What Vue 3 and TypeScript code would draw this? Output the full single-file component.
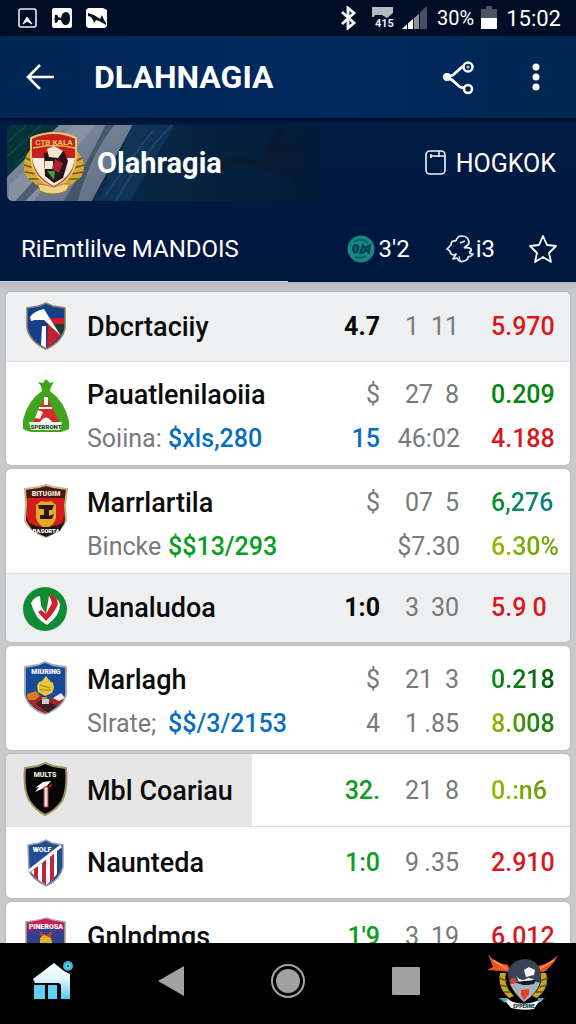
<script setup lang="ts">
interface Row {
  crest: string
  name: string
  label?: string
  value?: string
  tone?: string
  score: string
  scoreTone: string
  mid: string[]
  odds: string
  oddsTone: string
  score2?: string
  score2Tone?: string
  mid2?: string[]
  odds2?: string
  odds2Tone?: string
  shade?: string
  tall?: boolean
}

const cards: Row[][] = [
  [
    { crest: 'bolt', name: 'Dbcrtaciiy', score: '4.7', scoreTone: 'black', mid: ['1', '11'], odds: '5.970', oddsTone: 'red', shade: 'shaded' },
    {
      crest: 'bell', name: 'Pauatlenilaoiia', label: 'Soiina:', value: '$xls,280', tone: 'blue',
      score: '$', scoreTone: 'grey', mid: ['27', '8'], odds: '0.209', oddsTone: 'green',
      score2: '15', score2Tone: 'blue', mid2: ['46:02'], odds2: '4.188', odds2Tone: 'red',
    },
  ],
  [
    {
      crest: 'gold', name: 'Marrlartila', label: 'Bincke', value: '$$13/293', tone: 'lightgreen',
      score: '$', scoreTone: 'grey', mid: ['07', '5'], odds: '6,276', oddsTone: 'teal',
      score2: '', score2Tone: 'grey', mid2: ['$7.30'], odds2: '6.30%', odds2Tone: 'lime',
    },
    { crest: 'round', name: 'Uanaludoa', score: '1:0', scoreTone: 'black', mid: ['3', '30'], odds: '5.9 0', oddsTone: 'red', shade: 'shaded' },
  ],
  [
    {
      crest: 'royal', name: 'Marlagh', label: 'Slrate;', value: '$$/3/2153', tone: 'blue',
      score: '$', scoreTone: 'grey', mid: ['21', '3'], odds: '0.218', oddsTone: 'deep',
      score2: '4', score2Tone: 'grey', mid2: ['1', '.85'], odds2: '8.008', odds2Tone: 'olive',
    },
  ],
  [
    { crest: 'dark', name: 'Mbl Coariau', score: '32.', scoreTone: 'lightgreen', mid: ['21', '8'], odds: '0.:n6', oddsTone: 'lime', shade: 'half', tall: true },
    { crest: 'stripes', name: 'Naunteda', score: '1:0', scoreTone: 'lightgreen', mid: ['9', '.35'], odds: '2.910', oddsTone: 'red', tall: true },
  ],
  [
    { crest: 'purple', name: 'Gnlndmqs', score: "1'9", scoreTone: 'lightgreen', mid: ['3', '19'], odds: '6.012', oddsTone: 'red' },
  ],
]
</script>

<template>
  <div class="screen">
    <div class="status">
      <svg class="s-icon" viewBox="0 0 20 22"><rect x="1" y="2" width="17" height="18" rx="2" fill="none" stroke="#e8eef6" stroke-width="1.6" /><path d="M5 17l4-7 5 7-5-3z" fill="#fff" stroke="#fff" /></svg>
      <svg class="s-icon" viewBox="0 0 20 22"><rect y="1" width="20" height="20" rx="2" fill="#fff" /><path d="M3 8q3-1 3 2l3 1q1-6 5-6 4 0 4 6 0 7-4 7-4 0-5-5l-3 0q0 3-3 3-1-4 0-8z" fill="#06101f" /></svg>
      <svg class="s-icon s-wide" viewBox="0 0 22 22"><path d="M0 3l2-2h15l4 2v16l-2 2H2l-2-2z" fill="#fff" /><path d="M2 6l6 2 6 4 2-4 2 5 2 3v2l-7-4-3-1-2 3-1-3-2-3-3-1z" fill="#06101f" /></svg>
      <span class="grow"></span>
      <svg class="s-icon bt" viewBox="0 0 16 24"><path d="M1 6l12 11-6 5V2l6 5L1 18" fill="none" stroke="#f3f6fa" stroke-width="2.800" /></svg>
      <svg class="s-icon s-tag" viewBox="0 0 24 24"><path d="M1 1h21v6l-6 5-5-3H4l-1 2H1z" fill="#b5bac2" /><text x="4" y="21" font-family="Roboto" font-size="11" font-weight="700" fill="#e9edf2">415</text></svg>
      <svg class="s-icon s-sig" viewBox="0 0 26 24"><path d="M25 0v23H0z" fill="#48505f" /><path d="M17 8v15H0z" fill="#8c939e" /><path d="M11 13v10H0z" fill="#fff" /><path d="M5.500 16v8M11.500 11v13M17.500 6v18" stroke="#07122a" stroke-width="1" /></svg>
      <span class="pct">30%</span>
      <svg class="s-icon s-bat" viewBox="0 0 16 24"><path d="M5 0h6v3h5v9H0V3h5z" fill="#4b5362" /><path d="M0 12h16v11H0z" fill="#fff" /></svg>
      <span class="clock">15:02</span>
    </div>

    <header class="bar">
      <button class="icon-btn back" aria-label="Back">
        <svg width="30" height="30" viewBox="0 0 30 30"><path d="M15 3L3 15l12 12M3 15h26" fill="none" stroke="#fff" stroke-width="2.600" /></svg>
      </button>
      <h1>DLAHNAGIA</h1>
      <button class="icon-btn share" aria-label="Share">
        <svg width="34" height="36" viewBox="0 0 34 36"><path d="M26 7l-5 1-9 8-7 2 6 3 8 7 8 2" fill="none" stroke="#fff" stroke-width="2.800" /><circle cx="6" cy="18" r="4" fill="#fff" /><circle cx="27" cy="8" r="4.500" fill="#0a2a58" stroke="#fff" stroke-width="2.500" /><circle cx="27" cy="8" r="1.500" fill="#b9c6da" /><circle cx="27" cy="30" r="4" fill="#0a2044" stroke="#fff" stroke-width="2.500" /></svg>
      </button>
      <button class="icon-btn more" aria-label="More options">
        <svg width="8" height="30" viewBox="0 0 8 30"><circle cx="4" cy="5" r="3.500" fill="#fff" /><circle cx="4" cy="15" r="3.500" fill="#fff" /><circle cx="4" cy="25" r="3.500" fill="#fff" /></svg>
      </button>
    </header>

    <section class="hero">
      <div class="hero-top">
        <div class="banner">
          <svg class="banner-art" viewBox="0 0 311 76" preserveAspectRatio="xMidYMid slice">
            <defs>
              <linearGradient id="fade"><stop offset="0" stop-color="#173855" /><stop offset=".45" stop-color="#082644" /><stop offset="1" stop-color="#021a37" /></linearGradient>
              <linearGradient id="silk" x2="1" y2="1"><stop offset="0" stop-color="#8690a1" /><stop offset="1" stop-color="#5d6b82" /></linearGradient>
            </defs>
            <rect width="311" height="76" fill="url(#fade)" />
            <path d="M0 0h52L0 52z" fill="#063238" />
            <path d="M0 18L20 0M0 32L34 0M8 40L46 4" stroke="#115048" stroke-width="1" />
            <path d="M52 0h73L84 76H0V52z" fill="url(#silk)" />
            <path d="M66 0h22L26 76H2V60z" fill="#8f98a6" opacity=".7" />
            <path d="M98 0h9Q84 28 70 76H56Q80 38 98 0zM8 76l22-24 8 3-20 21z" fill="#35475f" opacity=".7" />
            <path d="M125 0h42l-45 76H90z" fill="#12395e" opacity=".7" />
            <path d="M164 0Q130 35 108 76M145 6Q122 34 98 70" fill="none" stroke="#315575" stroke-width="2" opacity=".5" />
            <path d="M267 2q8-2 7 6l-3 7 10 6 8 0 1-8 8 3-2 10-13 5-9-3-9 11 10 5 14 2 5 23-5 0-5-18-16-1-16-9-14 0-12-3-14 12-4-2 11-16 12-2 16 6 10-5 6-18 8-5z" fill="#0b1728" opacity=".5" />
          </svg>
          <svg class="emblem" viewBox="0 0 66 64">
            <path d="M9 19Q-2 33 6 46l15 12 4-5Q8 43 9 19zM55 19q13 14 5 27L45 58l-4-5q17-10 14-34z" fill="#d3a936" />
            <path d="M5 27l8 4M3 34l10 3M4 41l12 2M8 48l11 0M61 27l-8 4M63 34l-10 3M62 41l-12 2M58 48l-11 0" stroke="#725713" stroke-width="1.500" />
            <path d="M10 7Q33-3 55 7v18q0 22-22 32Q10 47 10 25z" fill="#c91f20" stroke="#e7c56a" stroke-width="2" />
            <path d="M11 27h43q-2 18-21 28Q14 46 11 27z" fill="#f3eddf" />
            <path d="M12 17Q33 12 54 17" stroke="#e9c358" fill="none" stroke-width="1.500" />
            <text x="33" y="14" text-anchor="middle" font-family="Roboto" font-size="8" font-weight="700" fill="#f3c64b">CTB KALA</text>
            <path d="M23 22l20-2 4 10-5 17-9 5-9-7z" fill="#251319" /><path d="M26 18l7-3 9 5-5 7-9-1zM24 30h8v8h-8z" fill="#f2e5d0" /><path d="M34 28l8 4-4 10-7-4z" fill="#a9222b" /><path d="M26 40l8 0-1 9z" fill="#3d9d45" />
            <path d="M17 53l8 1 8 2 9-3 7 0-4 7Q32 66 19 60z" fill="#efd28b" stroke="#a87b20" />
          </svg>
          <h2>Olahragia</h2>
        </div>
        <button class="book">
          <svg width="22" height="26" viewBox="0 0 22 26"><rect x="1" y="1" width="19" height="23" rx="4" fill="none" stroke="#f1f5fa" stroke-width="1.600" /><path d="M5 6h14M14 1v6M6 4v4" stroke="#f1f5fa" stroke-width="1.500" /></svg>
          <span>HOGKOK</span>
        </button>
      </div>
      <div class="hero-tabs">
        <h3>RiEmtlilve MANDOIS</h3>
        <span class="count first">
          <svg width="28" height="28" viewBox="0 0 28 28"><circle cx="14" cy="14" r="13.500" fill="#128783" /><path d="M6 14q0-5 4-4 3 2 0 7-4 2-4-3zM13 18l3-8 2 3 5-3-1 8-3-3-3 3z" fill="#0d5f6c" stroke="#06364d" stroke-width="1.600" /><path d="M7 7q8-5 14 1M8 22q6 2 11-1" fill="none" stroke="#0a5563" stroke-width="1.600" /></svg>
          <span>3'2</span>
        </span>
        <span class="count second">
          <svg width="28" height="30" viewBox="0 0 28 30"><path d="M10 7q1-5 6-5 6 0 7 6 0 3-3 4l-2 2M10 7q-5-1-5 4l-4 4q3 1 4 5 4 2 5 0l-3 5 4-1q3 5 7 3 4-1 4-4 4-1 5-3l-4-1M18 14q4-1 7 1 1 2-2 3M19 7l-5 2" fill="none" stroke="#e9f1f9" stroke-width="1.700" stroke-linejoin="round" /><path d="M13 22l1 4" stroke="#e9f1f9" /></svg>
          <span>i3</span>
        </span>
        <button class="icon-btn star" aria-label="Favourite">
          <svg width="28" height="28" viewBox="0 0 28 28"><path d="M14 1l4 9 9 1-7 7 2 9-8-5-8 5 2-9-7-7 9-1z" fill="none" stroke="#fff" stroke-width="1.800" stroke-linejoin="round" /></svg>
        </button>
      </div>
    </section>

    <main class="list">
      <div v-for="(card, ci) in cards" :key="ci" class="card">
        <table>
          <tbody>
            <tr v-for="row in card" :key="row.name" :class="[row.shade, { double: row.label, tall: row.tall }]">
              <td class="c-crest">
                <svg class="crest" viewBox="0 0 48 56">
                  <g v-if="row.crest === 'bolt'">
                    <path d="M5 9l12-2 7-3 7 3 12 2v20q-3 14-19 21Q8 43 5 29z" fill="#153e8b" stroke="#8d8062" stroke-width="1.500" />
                    <path d="M26 19l16 0v10q-5 12-17 20z" fill="#c71f2d" /><path d="M29 25l13 0v6l-3 5-8-5z" fill="#253a2c" />
                    <path d="M8 18q4-6 14-8l3 5 14 22-17-16-9 0-4 1z" fill="#fff" /><path d="M20 27h4v22l-5-3z" fill="#fff" />
                  </g>
                  <g v-else-if="row.crest === 'bell'">
                    <path d="M24 3l4 4 4-1-3 5-1 4q15 11 19 30l0 8q-11 5-23 5T1 53l0-9q5-20 19-29l-1-5-3-4 5 1z" fill="#3ea51d" />
                    <path d="M24 20l6 11 8 16H11l7-16z" fill="#d72a25" /><path d="M22 21h4v8h-4zM13 42l3-8 5 2-3 7z" fill="#fff" /><path d="M18 46q6-9 12 0z" fill="#fff" /><path d="M17 32h13" stroke="#fff" stroke-width="2" />
                    <path d="M7 46l33 0-2 8H9z" fill="#eff5e8" /><text x="24" y="53" text-anchor="middle" font-family="Roboto" font-size="6" font-weight="900" fill="#193d20">SPERRONT</text>
                  </g>
                  <g v-else-if="row.crest === 'gold'">
                    <path d="M3 5l14-2 7-2 7 2 14 2-2 16 1 16q-7 11-20 16Q9 48 3 37l1-16z" fill="#4a1717" stroke="#c9b585" stroke-width="2" />
                    <path d="M5 14h37v18q0 6-6 11l-24 0q-7-5-7-11z" fill="#d41c1b" />
                    <text x="24" y="12" text-anchor="middle" font-family="Roboto" font-size="7" font-weight="900" fill="#f4e7d1">BITUGIM</text>
                    <path d="M14 21l5-4 5 1 5-1 5 4v13q-2 7-10 11-8-4-10-11z" fill="#e1ab28" /><path d="M16 21h16l-2 5h-3v6l5-2-2 5H18v-4h4v-6h-5z" fill="#2b160c" />
                    <path d="M5 38q17 10 38 0l-5 9-14 6-13-6z" fill="#201713" /><text x="24" y="49" text-anchor="middle" font-family="Roboto" font-size="6" font-weight="900" fill="#fff">BASORTA</text>
                  </g>
                  <g v-else-if="row.crest === 'round'">
                    <circle cx="23" cy="29" r="22" fill="#128b36" /><path d="M9 23q3-6 9-7l1 10 5 8 3-18q9 1 11 8 0 12-13 21-12-6-16-22z" fill="#fff" /><path d="M27 15q9 1 9 9-3 8-12 17l-8-9 3-2 5 4 6-11z" fill="#d61d2b" />
                  </g>
                  <g v-else-if="row.crest === 'royal'">
                    <path d="M3 6l13-2 7-3 8 3 13 2v28q-4 13-21 19Q7 48 3 34z" fill="#164a99" stroke="#a6a8ac" stroke-width="1.800" />
                    <text x="24" y="13" text-anchor="middle" font-family="Roboto" font-size="7" font-weight="900" fill="#fff">MIURING</text>
                    <path d="M4 36l10-3 10 5 11-2 8 0q-6 11-20 16Q8 46 4 36z" fill="#a42628" />
                    <path d="M5 33l9-3 4 5-5 4-7 0zM20 36l5 0 3 9-9 0z" fill="#db792a" /><path d="M16 31l-1-6 2-4 3-1 4-5 4 5 3 2 1 5-2 5-7 3z" fill="#edc73b" /><path d="M18 24l10 3M18 29l11 0" stroke="#967b19" /><path d="M31 37l8-5 4 5-6 3z" fill="#f1eee9" /><path d="M14 43l5-4 8 2 8 4-9 7z" fill="#3a241f" /><path d="M20 38h7v5h-7z" fill="#c8ced2" />
                  </g>
                  <g v-else-if="row.crest === 'dark'">
                    <path d="M3 6l13-2 7-3 8 3 13 2q2 21-4 33-7 10-17 14Q13 48 7 38 1 27 3 6z" fill="#060606" stroke="#9d9660" stroke-width="2" />
                    <text x="23" y="15" text-anchor="middle" font-family="Roboto" font-size="7" font-weight="900" fill="#f3ecd9">MULTS</text><path d="M13 26l8-6 8-1-5 6-11 5 4-5z" fill="#fff" /><path d="M22 25l4 0 0 20-4 0z" fill="#f9dcdc" stroke="#b82c31" /><path d="M27 23l4-1-4 4z" fill="#d22835" />
                  </g>
                  <g v-else-if="row.crest === 'stripes'">
                    <path d="M6 11l11-2 7-3 6 3 11 2v22q-3 13-17 19Q10 45 7 37z" fill="#204e91" stroke="#9aa1b4" stroke-width="1.500" />
                    <text x="20" y="18" text-anchor="middle" font-family="Roboto" font-size="7" font-weight="900" fill="#fff">WOLF</text>
                    <path d="M9 38l26-22v24q-4 6-11 11-9-5-15-13z" fill="#fff" /><path d="M12 35l4-3v14l-4-4zM20 29l4-4v26l-4-3zM28 23l4-4v25l-4 4z" fill="#c3243b" /><path d="M7 37L39 12" stroke="#fff" stroke-width="3" />
                  </g>
                  <g v-else>
                    <path d="M4 13l13-2 7-2 7 2 12 2v27q-5 10-19 15Q8 50 4 40z" fill="#343f8a" stroke="#ba9ca5" stroke-width="1.500" /><path d="M5 14l19-4 18 4v7q-18-4-36 1z" fill="#c91e58" /><text x="24" y="20" text-anchor="middle" font-family="Roboto" font-size="7" font-weight="900" fill="#fff">PINEROSA</text><path d="M17 22l7 4 7-4-3 7-8 0z" fill="#d33b2a" /><path d="M18 29l4-3 7 3 2 8-13 0z" fill="#e2b525" />
                  </g>
                </svg>
              </td>
              <td class="c-name">
                <div class="line name">{{ row.name }}</div>
                <div v-if="row.label" class="line sub"><span class="label">{{ row.label }}</span><span :class="['value', row.tone]">{{ row.value }}</span></div>
              </td>
              <td class="c-score">
                <div :class="['line', row.scoreTone]">{{ row.score }}</div>
                <div v-if="row.label" :class="['line', row.score2Tone]">{{ row.score2 }}</div>
              </td>
              <td class="c-mid">
                <div class="line pair"><span v-for="part in row.mid" :key="part">{{ part }}</span></div>
                <div v-if="row.mid2" :class="['line', row.mid2.length > 1 ? 'pair' : 'solo']"><span v-for="part in row.mid2" :key="part">{{ part }}</span></div>
              </td>
              <td class="c-odds">
                <div class="line"><span :class="row.oddsTone">{{ row.odds }}</span></div>
                <div v-if="row.odds2" class="line"><span :class="row.odds2Tone">{{ row.odds2 }}</span></div>
              </td>
            </tr>
          </tbody>
        </table>
      </div>
    </main>

    <nav class="nav">
      <button class="icon-btn" aria-label="Home">
        <svg width="44" height="42" viewBox="0 0 44 42"><defs><linearGradient id="house" x2="0" y2="1"><stop offset="0" stop-color="#fff" /><stop offset=".45" stop-color="#dff7ff" /><stop offset="1" stop-color="#55c9f5" /></linearGradient></defs><path d="M2 19L23 3l10 8 6 3v25h-9V25l-2-2H4z" fill="url(#house)" /><path d="M3 25h11v14H3zM17 25h9v14h-9z" fill="#5fd0f4" /><circle cx="37" cy="6" r="5" fill="#39b3df" /><circle cx="37" cy="6" r="2" fill="#0e5f8b" stroke="#a9ecff" /></svg>
      </button>
      <button class="icon-btn" aria-label="Back">
        <svg width="28" height="32" viewBox="0 0 28 32"><path d="M27 1v30L1 16z" fill="#a1a1a1" /></svg>
      </button>
      <button class="icon-btn" aria-label="Overview">
        <svg width="36" height="36" viewBox="0 0 36 36"><circle cx="18" cy="18" r="16" fill="none" stroke="#a5a5a5" stroke-width="2" /><circle cx="18" cy="18" r="12" fill="#a1a1a1" /></svg>
      </button>
      <button class="icon-btn" aria-label="Recent apps">
        <svg width="30" height="30" viewBox="0 0 30 30"><rect x="1" y="1" width="28" height="28" rx="1" fill="#a1a1a1" /></svg>
      </button>
      <button class="icon-btn" aria-label="Club">
        <svg width="74" height="58" viewBox="0 0 74 58">
          <path d="M2 2l7 8 13 3 3 7-10-1-14-1 6-3zM72 3l-9 8-11 3-4 8 12-3 8-9z" fill="#ec512b" /><path d="M7 8l14 9M68 8L53 17" stroke="#f99443" stroke-width="2" />
          <path d="M14 21q-3 15 9 25l5-2Q17 34 20 21zM60 21q4 15-9 25l-5-2q12-10 8-23z" fill="#c7a52b" /><path d="M13 26l8 3M14 33l8 2M18 40l7 0M62 26l-8 3M61 33l-8 2M57 40l-7 0" stroke="#645512" stroke-width="1.600" />
          <path d="M22 20Q25 8 39 7q14 1 16 15 1 15-17 27Q22 38 22 20z" fill="#384454" /><path d="M24 32l7-3 8 2 9-2 6 2q-3 10-16 19Q28 41 24 32z" fill="#a9b0b9" />
          <path d="M38 18l5-3 6 3-1 5-8 2zM30 23q2 5 8 5l4-2 6 1-5 4-10-1z" fill="#fff" /><path d="M28 30l10-1 12-1-2 4-6 1-5 0z" fill="#111c2b" /><path d="M35 38l8-1 0 5-5 6-3-5z" fill="#e63f25" /><circle cx="27" cy="29" r="3" fill="#e33840" />
          <path d="M13 46l7 0 7 4q12 4 24-1l7-2-6 4-4 6q-11 2-23-1l-5-6z" fill="#eaf5f5" /><path d="M13 46l9 0-3 5zM52 46l7 0-7 4z" fill="#4ea8bd" /><text x="38" y="56" text-anchor="middle" font-family="Roboto" font-size="5" font-weight="900" fill="#1a3440">EPPERNE</text>
        </svg>
      </button>
    </nav>
  </div>
</template>

<style>
body {
  margin: 0;
  background: #000;
}
</style>

<style scoped>
.screen {
  display: flex;
  flex-direction: column;
  height: 100vh;
  overflow: hidden;
  font-family: Roboto, "Liberation Sans", sans-serif;
  color: #fff;
}
h1, h2, h3 { margin: 0; white-space: nowrap; }
button { font: inherit; color: inherit; background: none; border: 0; padding: 0; cursor: pointer; }
svg { display: block; flex: none; }
.icon-btn { display: flex; align-items: center; justify-content: center; }

.status {
  display: flex;
  align-items: center;
  flex: none;
  height: 36px;
  padding: 0 15px 0 18px;
  background: #000d25;
  font-size: 22px;
}
.s-icon { width: 20px; height: 22px; margin-right: 14px; }
.s-wide { width: 22px; }
.bt { width: 16px; height: 24px; margin-right: 14px; }
.s-tag { width: 24px; height: 24px; margin-right: 7px; }
.s-sig { width: 26px; height: 24px; margin-right: 9px; }
.s-bat { width: 16px; height: 24px; margin: 0 9px 0 7px; }
.grow { flex: 1; }
.pct { font-size: 20px; }

.bar {
  position: relative;
  display: flex;
  align-items: center;
  flex: none;
  height: 82px;
  padding: 0 36px 0 25px;
  background: linear-gradient(to right, #002654, #002a60 60%, #00254f);
  box-shadow: 0 2px 4px #000a20;
}
h1 { flex: 1; margin-left: 39px; font-size: 32px; font-weight: 700; }
.share { margin-right: 57px; }

.hero {
  flex: none;
  background: linear-gradient(#001c46, #00173d);
}
.hero-top {
  display: flex;
  justify-content: space-between;
  align-items: center;
  padding: 7px 20px 0 7px;
}
.banner {
  position: relative;
  display: flex;
  align-items: center;
  width: 57%;
  height: 76px;
  border-radius: 6px 2px 2px 6px;
  overflow: hidden;
}
.banner-art { position: absolute; inset: 0; width: 100%; height: 100%; }
.emblem { position: relative; width: 66px; height: 64px; margin-left: 14px; }
h2 { position: relative; margin-left: 10px; font-size: 29px; font-weight: 700; }
.book { display: flex; align-items: center; gap: 9px; font-size: 25px; }
.hero-tabs {
  display: flex;
  align-items: center;
  height: 81px;
  padding: 14px 19px 0 21px;
  background: linear-gradient(#c8d0dc, #c8d0dc) left bottom / 50% 1px no-repeat;
  box-sizing: border-box;
}
h3 { flex: 1; font-size: 24px; font-weight: 400; }
.count { display: flex; align-items: center; font-size: 24px; }
.first { gap: 4px; margin-right: 36px; }
.second { gap: 2px; margin-right: 34px; }

.list {
  flex: 1;
  min-height: 0;
  overflow: hidden;
  display: flex;
  flex-direction: column;
  gap: 4px;
  padding: 10px 6px 0;
  background: linear-gradient(#b7b8bb, #c8c9cc 10px, #c8c9cc);
}
.card {
  flex: none;
  overflow: hidden;
  border-radius: 5px;
  background: #fff;
  box-shadow: 0 0 2px #999ca0;
}
table { width: 100%; border-collapse: collapse; table-layout: fixed; }
td { padding: 12px 0 13px; vertical-align: top; }
.double td { padding: 11px 0 5px; }
.tall td { padding: 14px 0; }
tr + tr { box-shadow: inset 0 1px #dedfe1; }
.shaded { background: #eeeff0; }
.half { background: linear-gradient(#e6e6e7, #e6e6e7) left / 246px 100% no-repeat; }
td.c-crest { width: 81px; padding: 0; vertical-align: middle; }
.double td.c-crest { vertical-align: top; padding-top: 15px; }
.crest { width: 48px; height: 56px; margin-left: 16px; }
.c-score { width: 60px; text-align: right; font-weight: 500; }
.c-mid { width: 80px; }
.c-odds { width: 110px; font-weight: 500; }
.line { height: 44px; line-height: 46px; font-size: 25px; white-space: nowrap; }
.name { color: #0b0b0b; font-size: 27px; font-weight: 500; }
.sub { display: flex; color: #77797b; }
.label { width: 81px; }
.value { font-weight: 500; }
.c-mid .line { display: flex; color: #77797b; }
.pair { justify-content: space-between; padding: 0 1px 0 25px; }
.solo { justify-content: flex-end; }
.c-odds .line { padding-left: 31px; }
.black { color: #080808; font-weight: 700; }
.grey { color: #77797b; font-weight: 400; }
.red { color: #d7181f; }
.green { color: #07830f; }
.lightgreen { color: #0b9d22; }
.blue { color: #086dc0; }
.teal, .lime, .deep, .olive { color: transparent; background-clip: text; }
.teal { background-image: linear-gradient(to right, #079322, #087f8c); }
.lime { background-image: linear-gradient(to right, #8fbd00, #659e08); }
.deep { background-image: linear-gradient(to right, #078f18, #045c12); }
.olive { background-image: linear-gradient(to right, #9abb00, #1d7f14 70%); }

.nav {
  display: flex;
  align-items: center;
  justify-content: space-between;
  flex: none;
  height: 81px;
  padding: 0 16px 6px;
  box-sizing: border-box;
  background: #000;
}
.nav .icon-btn { width: 74px; }
</style>
